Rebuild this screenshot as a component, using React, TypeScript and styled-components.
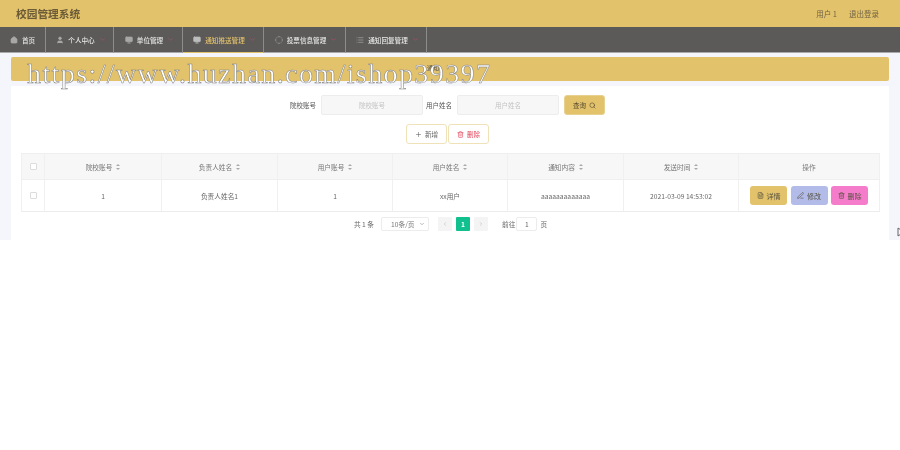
import styled, { createGlobalStyle } from "styled-components";
import {
  ChevronDown,
  ChevronLeft,
  ChevronRight,
  CircleDashed,
  FileText,
  Home,
  List,
  Monitor,
  PenLine,
  Plus,
  Search,
  Trash2,
  User,
} from "lucide-react";

const GlobalStyle = createGlobalStyle`
  html, body {
    margin: 0;
    padding: 0;
    background: #fff;
    font-family: "Noto Sans CJK SC", "Liberation Sans", sans-serif;
  }
  * { box-sizing: border-box; }
`;

const gold = "#e3c26c";

const Page = styled.div`
  filter: blur(0.3px);
  overflow: hidden;
`;

const Header = styled.header`
  height: 27px;
  background: ${gold};
  display: flex;
  align-items: center;
  justify-content: space-between;
  padding: 0 21px 0 16px;
`;

const Logo = styled.div`
  font-size: 10.7px;
  font-weight: 700;
  color: #6a5a36;
`;

const HeaderLinks = styled.div`
  display: flex;
  gap: 12px;
  font-size: 7.5px;
  color: #6f6344;
`;

const Nav = styled.nav`
  height: 26px;
  background: #5b5a58;
  border-bottom: 1px solid #a9a9a9;
  display: flex;
`;

const NavItem = styled.div<{ $w: number; $active?: boolean; $home?: boolean }>`
  width: ${(p) => p.$w}px;
  display: flex;
  align-items: center;
  justify-content: center;
  gap: 4px;
  padding-left: ${(p) => (p.$home ? 0 : 3)}px;
  font-size: 6.6px;
  font-weight: 500;
  color: ${(p) => (p.$active ? gold : "#e8e8e8")};
  border-right: 1px solid #8c8c8c;
  border-bottom: 1px solid ${(p) => (p.$active ? gold : "transparent")};
  margin-bottom: -1px;

  svg.main {
    color: ${(p) => (p.$active ? "#bdbdbd" : "#a8a8a8")};
    flex-shrink: 0;
  }
  svg.arrow {
    color: #a5506c;
    flex-shrink: 0;
  }
`;

const Body = styled.main`
  height: 187px;
  background: #f5f6fb;
  padding: 4px 11px 0;
  display: flex;
  flex-direction: column;
  gap: 5px;
  position: relative;
`;

const Banner = styled.div`
  height: 24px;
  background: ${gold};
  border-radius: 2px;
  display: flex;
  align-items: center;
  justify-content: center;
  padding: 0 34px 4px 0;
  font-size: 6px;
  color: #4a4a4a;
`;

const Watermark = styled.div`
  position: absolute;
  left: 27px;
  top: 3px;
  font-family: "Liberation Serif", serif;
  font-size: 28px;
  letter-spacing: 1.4px;
  line-height: 36px;
  white-space: nowrap;
  color: #fff;
  -webkit-text-stroke: 0.5px #7c7c7c;
`;

const Cursor = styled.div`
  position: absolute;
  right: -5px;
  top: 174px;
  color: #666;
  line-height: 0;
`;

const Panel = styled.section`
  flex: 1;
  background: #fff;
  padding: 9px 9px 0 10px;
`;

const SearchRow = styled.div`
  height: 20px;
  display: flex;
  justify-content: center;
  align-items: center;
  font-size: 6.5px;
  color: #555;
  padding-right: 8px;
`;

const Label = styled.label`
  width: 30px;
  text-align: center;
  margin-right: 3px;
`;

const Input = styled.div`
  width: 102px;
  height: 20px;
  background: #f7f7f7;
  border: 1px solid #ededed;
  border-radius: 2px;
  display: flex;
  align-items: center;
  justify-content: center;
  color: #c4c4c4;
  margin-right: 1px;
`;

const QueryButton = styled.div`
  width: 41px;
  height: 20px;
  margin-left: 4px;
  background: ${gold};
  border-radius: 3px;
  border: 1px solid #e8d08f;
  display: flex;
  align-items: center;
  justify-content: center;
  gap: 3px;
  color: #54492c;
`;

const ActionRow = styled.div`
  margin-top: 9px;
  height: 20px;
  display: flex;
  justify-content: center;
  gap: 1px;
  padding-right: 6px;
`;

const OutlineButton = styled.div<{ $danger?: boolean }>`
  width: 41px;
  height: 20px;
  background: #fff;
  border: 1px solid #f0e2b8;
  border-radius: 3px;
  display: flex;
  align-items: center;
  justify-content: center;
  gap: 3px;
  font-size: 6.6px;
  color: ${(p) => (p.$danger ? "#e0475a" : "#666")};
`;

const Table = styled.div`
  margin-top: 9px;
  border-bottom: 1px solid #ececec;
`;

const columns = "24px 117px 116px 115px 115px 116px 115px 141px";

const HeadRow = styled.div`
  display: grid;
  grid-template-columns: ${columns};
  height: 27px;
  background: #f7f7f7;
  border-top: 1px solid #efefef;
  border-bottom: 1px solid #efefef;
  color: #777;
`;

const DataRow = styled.div`
  display: grid;
  grid-template-columns: ${columns};
  height: 31px;
  color: #666;
`;

const Cell = styled.div`
  display: flex;
  align-items: center;
  justify-content: center;
  gap: 4px;
  font-size: 6.7px;
  border-right: 1px solid #f0f0f0;

  &:first-child {
    border-left: 1px solid #f0f0f0;
  }
`;

const Check = styled.span`
  width: 7px;
  height: 7px;
  background: #fff;
  border: 1px solid #dcdcdc;
  border-radius: 1px;
`;

const Sort = styled.span`
  display: inline-block;
  width: 4px;
  height: 6px;
  position: relative;

  &::before,
  &::after {
    content: "";
    position: absolute;
    left: 0;
    border-left: 2px solid transparent;
    border-right: 2px solid transparent;
  }
  &::before {
    top: 0;
    border-bottom: 2px solid #aaa;
  }
  &::after {
    bottom: 0;
    border-top: 2px solid #aaa;
  }
`;

const RowButtons = styled.div`
  display: flex;
  gap: 3.5px;
`;

const RowButton = styled.div<{ $bg: string }>`
  width: 37px;
  height: 19px;
  background: ${(p) => p.$bg};
  border-radius: 3px;
  display: flex;
  align-items: center;
  justify-content: center;
  gap: 3px;
  font-size: 7px;
  color: #55503f;
`;

const Pager = styled.div`
  margin-top: 5px;
  display: flex;
  justify-content: center;
  align-items: center;
  font-size: 6.7px;
  color: #666;
`;

const PageSize = styled.div`
  width: 48px;
  height: 14px;
  margin: 0 9px 0 7px;
  border: 1px solid #ececec;
  border-radius: 2px;
  display: flex;
  align-items: center;
  justify-content: space-between;
  padding: 0 3px 0 9px;
  color: #777;
`;

const PageButton = styled.div<{ $current?: boolean }>`
  width: 14px;
  height: 14px;
  margin-right: 4px;
  border-radius: 1px;
  background: ${(p) => (p.$current ? "#10c08f" : "#f4f4f5")};
  color: ${(p) => (p.$current ? "#fff" : "#b5b5b5")};
  font-weight: 700;
  display: flex;
  align-items: center;
  justify-content: center;
`;

const JumpLabel = styled.span`
  margin-left: 10px;
`;

const PageInput = styled.div`
  width: 21px;
  height: 14px;
  margin: 0 3px 0 1px;
  border: 1px solid #ececec;
  border-radius: 2px;
  display: flex;
  align-items: center;
  justify-content: center;
`;

const navItems = [
  { label: "首页", w: 46, icon: Home, home: true },
  { label: "个人中心", w: 68, icon: User },
  { label: "单位管理", w: 69, icon: Monitor },
  { label: "通知推送管理", w: 81, icon: Monitor, active: true },
  { label: "投票信息管理", w: 82, icon: CircleDashed },
  { label: "通知回复管理", w: 81, icon: List },
];

const headers = ["院校账号", "负责人姓名", "用户账号", "用户姓名", "通知内容", "发送时间"];
const row = ["1", "负责人姓名1", "1", "xx用户", "aaaaaaaaaaaaa", "2021-03-09 14:53:02"];

function App() {
  return (
    <Page>
      <GlobalStyle />
      <Header>
        <Logo>校园管理系统</Logo>
        <HeaderLinks>
          <span>用户 1</span>
          <span>退出登录</span>
        </HeaderLinks>
      </Header>
      <Nav>
        {navItems.map((item) => {
          const Icon = item.icon;
          return (
            <NavItem key={item.label} $w={item.w} $active={item.active} $home={item.home}>
              <Icon className="main" size={8} fill={item.icon === User || item.home || item.icon === Monitor ? "currentColor" : "none"} />
              {item.label}
              {!item.home && <ChevronDown className="arrow" size={7} strokeWidth={2.5} />}
            </NavItem>
          );
        })}
      </Nav>
      <Body>
        <Banner>通知</Banner>
        <Watermark>https://www.huzhan.com/ishop39397</Watermark>
        <Panel>
          <SearchRow>
            <Label>院校账号</Label>
            <Input>院校账号</Input>
            <Label>用户姓名</Label>
            <Input>用户姓名</Input>
            <QueryButton>
              查询 <Search size={7} />
            </QueryButton>
          </SearchRow>
          <ActionRow>
            <OutlineButton>
              <Plus size={7} /> 新增
            </OutlineButton>
            <OutlineButton $danger>
              <Trash2 size={7} /> 删除
            </OutlineButton>
          </ActionRow>
          <Table>
            <HeadRow>
              <Cell>
                <Check />
              </Cell>
              {headers.map((h) => (
                <Cell key={h}>
                  {h} <Sort />
                </Cell>
              ))}
              <Cell>操作</Cell>
            </HeadRow>
            <DataRow>
              <Cell>
                <Check />
              </Cell>
              {row.map((v, i) => (
                <Cell key={i}>{v}</Cell>
              ))}
              <Cell>
                <RowButtons>
                  <RowButton $bg={gold}>
                    <FileText size={7} /> 详情
                  </RowButton>
                  <RowButton $bg="#b3bce8">
                    <PenLine size={7} /> 修改
                  </RowButton>
                  <RowButton $bg="#f57cca">
                    <Trash2 size={7} /> 删除
                  </RowButton>
                </RowButtons>
              </Cell>
            </DataRow>
          </Table>
          <Pager>
            <span>共 1 条</span>
            <PageSize>
              10条/页 <ChevronDown size={6} />
            </PageSize>
            <PageButton>
              <ChevronLeft size={6} />
            </PageButton>
            <PageButton $current>1</PageButton>
            <PageButton>
              <ChevronRight size={6} />
            </PageButton>
            <JumpLabel>前往</JumpLabel>
            <PageInput>1</PageInput>
            <span>页</span>
          </Pager>
        </Panel>
        <Cursor>
          <svg width="8" height="10" viewBox="0 0 8 10" fill="none" stroke="currentColor" strokeWidth="1">
            <path d="M1 1v8l6-4z" />
          </svg>
        </Cursor>
      </Body>
    </Page>
  );
}

export default App;
